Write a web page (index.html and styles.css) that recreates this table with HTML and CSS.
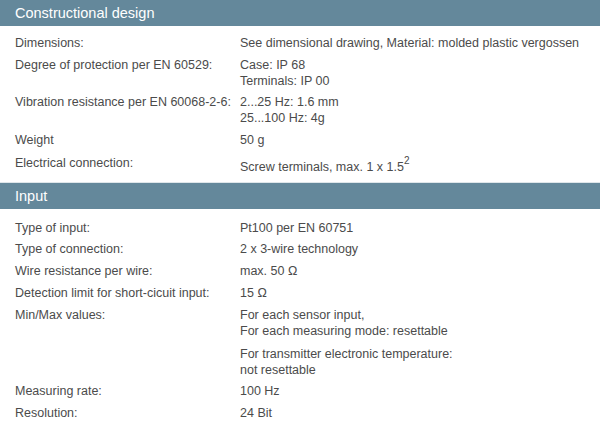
FILE: index.html
```html
<!DOCTYPE html>
<html lang="en">
<head>
<meta charset="utf-8">
<title>Technical specifications</title>
<link rel="stylesheet" href="styles.css">
</head>
<body>
<section class="spec-section">
  <h2 class="spec-title">Constructional design</h2>
  <table class="spec-table">
    <tr><td class="spec-label">Dimensions:</td><td class="spec-value">See dimensional drawing, Material: molded plastic vergossen</td></tr>
    <tr><td class="spec-label">Degree of protection per EN 60529:</td><td class="spec-value">Case: IP 68<br>Terminals: IP 00</td></tr>
    <tr><td class="spec-label">Vibration resistance per EN 60068-2-6:</td><td class="spec-value">2...25 Hz: 1.6 mm<br>25...100 Hz: 4g</td></tr>
    <tr><td class="spec-label">Weight</td><td class="spec-value">50 g</td></tr>
    <tr class="spec-row-sup"><td class="spec-label">Electrical connection:</td><td class="spec-value">Screw terminals, max. 1 x 1.5<sup>2</sup></td></tr>
  </table>
</section>
<section class="spec-section">
  <h2 class="spec-title spec-title-sep">Input</h2>
  <table class="spec-table spec-table-input">
    <tr><td class="spec-label">Type of input:</td><td class="spec-value">Pt100 per EN 60751</td></tr>
    <tr><td class="spec-label">Type of connection:</td><td class="spec-value">2 x 3-wire technology</td></tr>
    <tr><td class="spec-label">Wire resistance per wire:</td><td class="spec-value">max. 50 &Omega;</td></tr>
    <tr><td class="spec-label">Detection limit for short-cicuit input:</td><td class="spec-value">15 &Omega;</td></tr>
    <tr><td class="spec-label">Min/Max values:</td><td class="spec-value"><p class="spec-para">For each sensor input,<br>For each measuring mode: resettable</p><p class="spec-para">For transmitter electronic temperature:<br>not resettable</p></td></tr>
    <tr><td class="spec-label">Measuring rate:</td><td class="spec-value">100 Hz</td></tr>
    <tr><td class="spec-label">Resolution:</td><td class="spec-value">24 Bit</td></tr>
  </table>
</section>
</body>
</html>
```
FILE: styles.css
```css
html, body {
  margin: 0;
  padding: 0;
  background: #ffffff;
}
body {
  font-family: "Liberation Sans", Arial, sans-serif;
  font-size: 12.5px;
  line-height: 16px;
  color: #4b4b4b;
}
.spec-title {
  margin: 0;
  height: 26px;
  padding: 0 15px;
  background: #64889b;
  color: #ffffff;
  font-size: 14.5px;
  font-weight: normal;
  line-height: 26px;
}
.spec-title-sep {
  border-top: 1px solid #dfe6ea;
}
.spec-table {
  border-collapse: collapse;
  border-spacing: 0;
  margin: 6px 0 4px;
  width: 100%;
}
.spec-table-input {
  margin-top: 8px;
}
.spec-table td {
  padding: 3px 0 2.5px;
  vertical-align: top;
}
.spec-table-input td {
  padding-bottom: 2.75px;
}
.spec-table .spec-row-sup td {
  padding-top: 5px;
}
.spec-label {
  width: 225px;
  padding-left: 15px !important;
}
.spec-value sup {
  font-size: 10px;
  line-height: normal;
  vertical-align: 7px;
}
.spec-para {
  margin: 0 0 7px;
}
.spec-para:last-child {
  margin-bottom: 0;
}
```
